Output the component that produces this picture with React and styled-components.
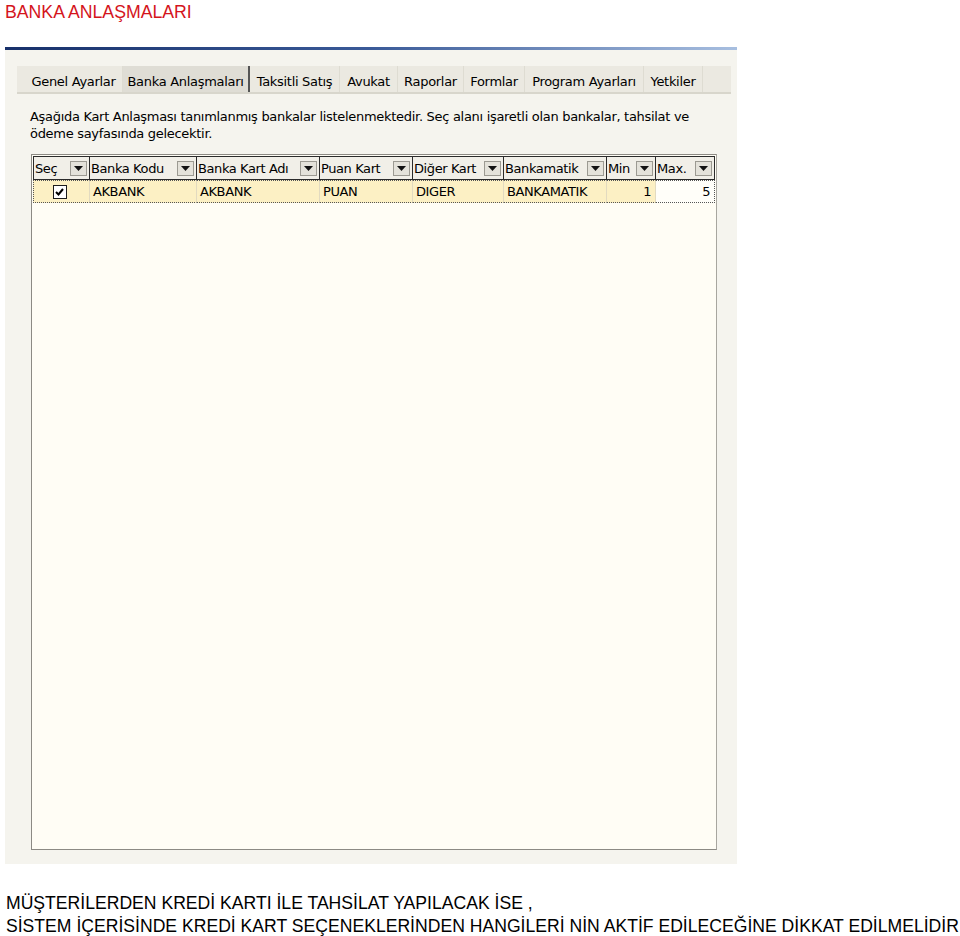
import React from 'react';
import styled, { createGlobalStyle, css } from 'styled-components';

const Global = createGlobalStyle`
  body {
    margin: 0;
    background: #fff;
    font-family: "Liberation Sans", Arial, sans-serif;
  }
`;

const Page = styled.div`
  width: 960px;
  padding: 2px 0 0 5px;
  box-sizing: border-box;
`;

const Heading = styled.h1`
  margin: 0;
  color: #d4141c;
  font-size: 17.7px;
  font-weight: normal;
  line-height: 20px;
`;

const Window = styled.div`
  margin-top: 25px;
  width: 732px;
  height: 817px;
  background: #f5f4ee;
  border-image: linear-gradient(to right, #17306a, #3a5a98 50%, #a8bfe0) 1;
  border-width: 3px 0 0 0;
  border-style: solid;
  box-sizing: border-box;
  padding: 16px 6px 14px 12px;
  display: flex;
  flex-direction: column;
  font-family: "DejaVu Sans", Tahoma, sans-serif;
  font-size: 13px;
  color: #000;
`;

const TabStrip = styled.div`
  display: flex;
  height: 28px;
  background: #ebe9e1;
  border-bottom: 2px solid #d8d6cc;
  box-sizing: border-box;
`;

const Tab = styled.div`
  box-sizing: border-box;
  display: flex;
  align-items: center;
  justify-content: center;
  padding: 4px 0 0 ${p => (p.lead ? '8px' : '0')};
  border-right: 1px solid #dedcd2;
  letter-spacing: -0.3px;
  white-space: nowrap;
  ${p =>
    p.active &&
    css`
      background: #dfddd5;
      border-right: 2px solid #555;
    `};
`;

const Intro = styled.p`
  margin: 14px 0 0 13px;
  line-height: 17px;
  letter-spacing: -0.3px;
  white-space: nowrap;
`;

const GridBox = styled.div`
  margin: 12px 0 0 14px;
  width: 686px;
  flex: 1;
  background: #fffdf5;
  border: 1px solid #8c8a84;
  border-right-color: #a8a69f;
  box-sizing: border-box;
  padding: 1px;
`;

const Row = styled.div`
  display: grid;
  grid-template-columns: 57px 107px 123px 93px 91px 103px 49px 59px;
  height: ${p => (p.head ? '24px' : '23px')};
`;

const HeadCell = styled.div`
  display: flex;
  align-items: center;
  justify-content: space-between;
  padding: 0 2px 0 1px;
  border: 1px solid #2b2b2b;
  border-left-width: ${p => (p.first ? '1px' : '0')};
  background: #f1efe8;
  letter-spacing: -0.4px;
  white-space: nowrap;
  overflow: hidden;
`;

const Drop = styled.span`
  width: 17px;
  height: 15px;
  flex: none;
  display: flex;
  align-items: center;
  justify-content: center;
  background: #e4e2da;
  border: 1px solid #9c9a92;
  box-sizing: border-box;
`;

const Cell = styled.div`
  display: flex;
  align-items: center;
  justify-content: ${p => (p.right ? 'flex-end' : p.center ? 'center' : 'flex-start')};
  padding: 0 4px 0 3px;
  background: ${p => (p.plain ? '#fffef9' : '#fcf0c4')};
  border-top: 1px dotted #555;
  border-bottom: 1px dotted #555;
  border-right: 1px solid ${p => (p.last ? 'transparent' : '#e2dac0')};
  letter-spacing: -0.4px;
  ${p =>
    p.first &&
    css`
      border-left: 1px dotted #555;
    `};
  ${p =>
    p.last &&
    css`
      border-right: 1px dotted #555;
    `};
`;

const Check = styled.span`
  width: 12px;
  height: 12px;
  border: 1px solid #1c1c1c;
  background: #fff;
  display: flex;
  align-items: center;
  justify-content: center;
  margin-right: 3px;
`;

const Footer = styled.div`
  margin: 28px 0 0 1px;
  font-size: 17.6px;
  line-height: 23px;
  color: #000;
  white-space: nowrap;
`;

const columns = ['Seç', 'Banka Kodu', 'Banka Kart Adı', 'Puan Kart', 'Diğer Kart', 'Bankamatik', 'Min', 'Max.'];
const tabs = [
  ['Genel Ayarlar', 106],
  ['Banka Anlaşmaları', 127],
  ['Taksitli Satış', 90],
  ['Avukat', 58],
  ['Raporlar', 66],
  ['Formlar', 61],
  ['Program Ayarları', 119],
  ['Yetkiler', 59],
];

function Arrow() {
  return (
    <svg width="9" height="5" viewBox="0 0 9 5">
      <path d="M0 0h9L4.5 5z" fill="#111" />
    </svg>
  );
}

export default function App() {
  return (
    <Page>
      <Global />
      <Heading>BANKA ANLAŞMALARI</Heading>
      <Window>
        <TabStrip>
          {tabs.map(([label, w], i) => (
            <Tab key={label} active={i === 1} lead={i === 0} style={{ width: w }}>
              {label}
            </Tab>
          ))}
        </TabStrip>
        <Intro>
          Aşağıda Kart Anlaşması tanımlanmış bankalar listelenmektedir. Seç alanı işaretli olan bankalar, tahsilat ve
          <br />
          ödeme sayfasında gelecektir.
        </Intro>
        <GridBox>
          <Row head>
            {columns.map((c, i) => (
              <HeadCell key={c} first={i === 0}>
                {c}
                <Drop>
                  <Arrow />
                </Drop>
              </HeadCell>
            ))}
          </Row>
          <Row>
            <Cell first center>
              <Check>
                <svg width="9" height="8" viewBox="0 0 9 8">
                  <path d="M1 4l2.5 2.5L8 1" stroke="#000" strokeWidth="2" fill="none" />
                </svg>
              </Check>
            </Cell>
            <Cell>AKBANK</Cell>
            <Cell>AKBANK</Cell>
            <Cell>PUAN</Cell>
            <Cell>DIGER</Cell>
            <Cell>BANKAMATIK</Cell>
            <Cell right>1</Cell>
            <Cell right plain last>5</Cell>
          </Row>
        </GridBox>
      </Window>
      <Footer>
        MÜŞTERİLERDEN KREDİ KARTI İLE TAHSİLAT YAPILACAK İSE ,
        <br />
        SİSTEM İÇERİSİNDE KREDİ KART SEÇENEKLERİNDEN HANGİLERİ NİN AKTİF EDİLECEĞİNE DİKKAT EDİLMELİDİR
      </Footer>
    </Page>
  );
}
